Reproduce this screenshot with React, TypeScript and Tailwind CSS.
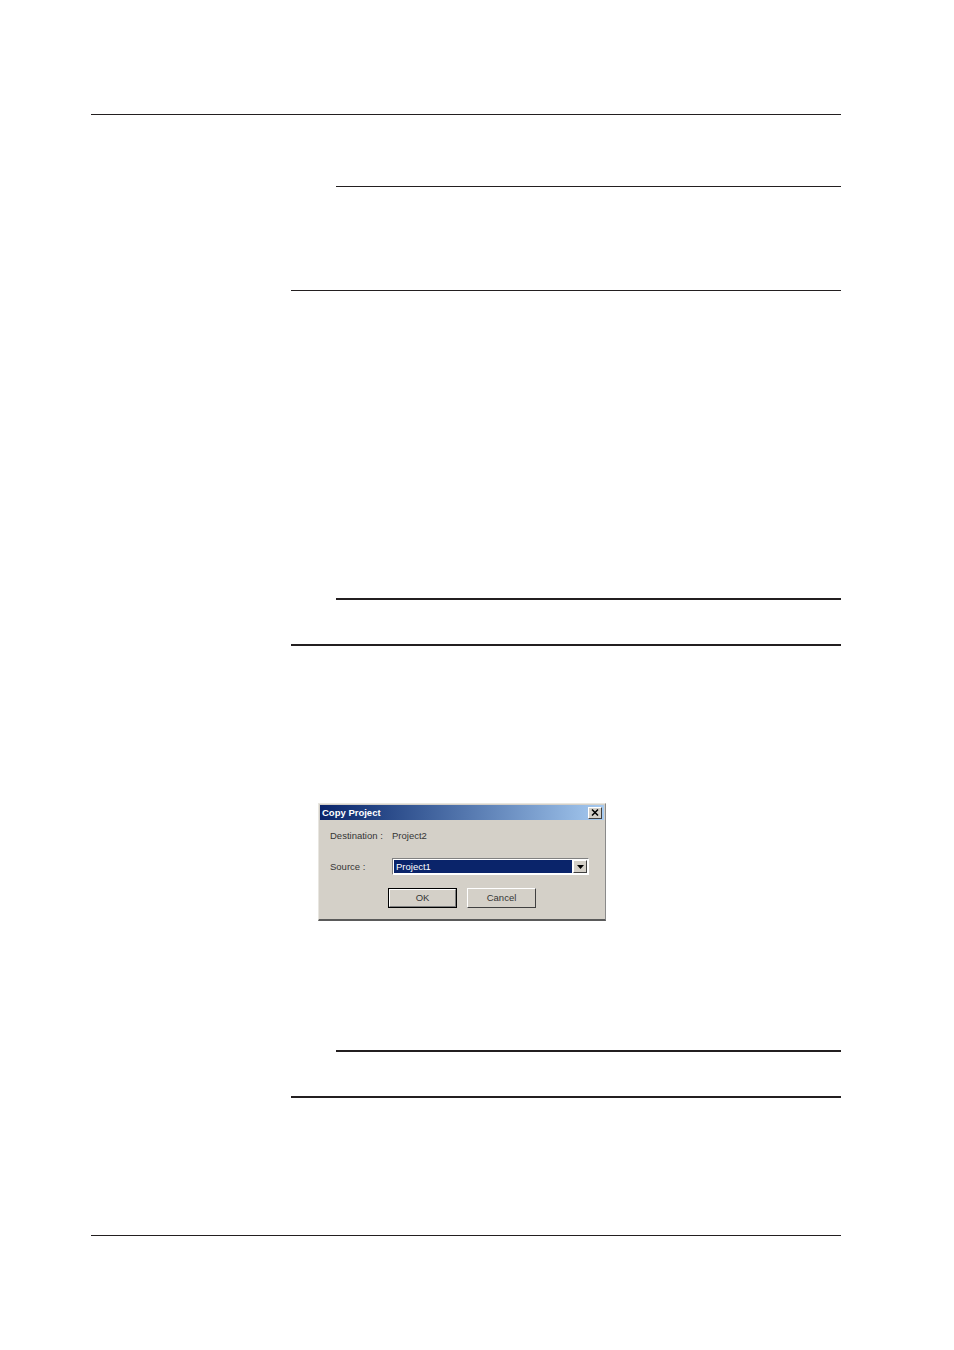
import React from "react";

const Line = ({ className }: { className: string }) => <div className={className} />;

function Dialog() {
  return (
    <div
      className="ml-[318px] w-[288px] h-[118px] bg-[#d4d0c8] border-t border-l border-t-[#e8e6e0] border-l-[#e8e6e0] border-b-2 border-r border-b-[#5a5a5a] border-r-[#8a8a8a] flex flex-col"
      style={{ fontFamily: '"Liberation Sans", Arial, sans-serif' }}
    >
      <div className="mx-px mt-px h-[15px] flex items-center justify-between pl-[2px] pr-[2px] bg-gradient-to-r from-[#0a246a] to-[#a6caf0]">
        <span className="text-white font-bold text-[9.5px] leading-none">Copy Project</span>
        <div className="w-[14px] h-[12px] bg-[#d4d0c8] border border-t-white border-l-white border-b-[#404040] border-r-[#404040] flex items-center justify-center">
          <svg width="8" height="7" viewBox="0 0 8 7">
            <path d="M1 0.5 L7 6.5 M7 0.5 L1 6.5" stroke="#000" strokeWidth="1.5" />
          </svg>
        </div>
      </div>
      <div className="flex flex-col pl-[11px] text-[#353535] text-[9.5px] leading-none">
        <div className="flex items-center mt-[11px] h-[10px]">
          <span className="w-[62px]">Destination :</span>
          <span>Project2</span>
        </div>
        <div className="flex items-center mt-[17px]">
          <span className="w-[62px]">Source :</span>
          <div className="w-[197px] h-[17px] bg-white border border-t-[#808080] border-l-[#808080] border-b-white border-r-white flex">
            <div className="flex-1 bg-[#0a246a] m-px flex items-center">
              <span className="text-white px-[1px] leading-[11px] ml-[1px]">Project1</span>
            </div>
            <div className="w-[14px] my-px mr-px bg-[#d4d0c8] border border-t-white border-l-white border-b-[#404040] border-r-[#404040] flex items-center justify-center">
              <svg width="7" height="4" viewBox="0 0 7 4">
                <path d="M0 0 H7 L3.5 4 Z" fill="#000" />
              </svg>
            </div>
          </div>
        </div>
        <div className="flex mt-[13px] ml-[58px] gap-[10px]">
          <div className="w-[69px] h-[20px] border border-black flex">
            <div className="flex-1 border border-t-white border-l-white border-b-[#808080] border-r-[#808080] flex items-center justify-center">
              OK
            </div>
          </div>
          <div className="w-[69px] h-[20px] border border-t-white border-l-white border-b-[#404040] border-r-[#404040] flex items-center justify-center">
            Cancel
          </div>
        </div>
      </div>
    </div>
  );
}

export default function App() {
  return (
    <div className="w-[954px] h-[1350px] bg-white flex flex-col overflow-hidden">
      <Line className="mt-[114px] ml-[91px] w-[750px] h-px bg-[#231f20]" />
      <Line className="mt-[71px] ml-[336px] w-[505px] h-px bg-[#231f20]" />
      <Line className="mt-[103px] ml-[291px] w-[550px] h-px bg-[#231f20]" />
      <Line className="mt-[307px] ml-[336px] w-[505px] h-[2px] bg-[#231f20]" />
      <Line className="mt-[44px] ml-[291px] w-[550px] h-[2px] bg-[#231f20]" />
      <div className="mt-[157px]">
        <Dialog />
      </div>
      <Line className="mt-[129px] ml-[336px] w-[505px] h-[2px] bg-[#231f20]" />
      <Line className="mt-[44px] ml-[291px] w-[550px] h-[2px] bg-[#231f20]" />
      <Line className="mt-[137px] ml-[91px] w-[750px] h-px bg-[#231f20]" />
    </div>
  );
}
